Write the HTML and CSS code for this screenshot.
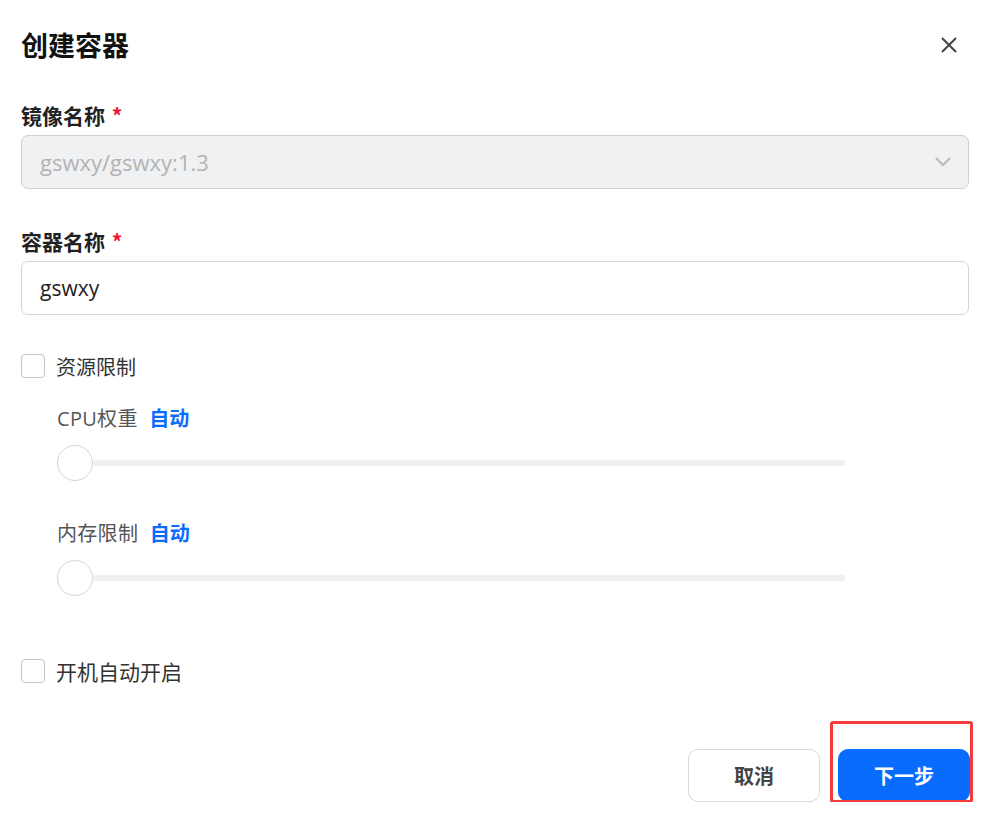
FILE: index.html
```html
<!DOCTYPE html>
<html>
<head>
    <title>创建容器</title>
    <meta charset="utf-8">
    <link rel="stylesheet" href="styles.css">
</head>
<body>
    <div class="dialog">
        <div class="dialog-header">
            <h2>创建容器</h2>
            <span class="close">
                <svg width="18" height="18" viewBox="0 0 18 18"><path d="M2 2 L16 16 M16 2 L2 16" stroke="#444" stroke-width="2" fill="none"/></svg>
            </span>
        </div>

        <div class="field">
            <label>镜像名称 <span class="req">*</span></label>
            <div class="select disabled">
                <span>gswxy/gswxy:1.3</span>
                <svg width="18" height="12" viewBox="0 0 18 12"><path d="M2 2 L9 9 L16 2" stroke="#bdbdbd" stroke-width="2.4" fill="none"/></svg>
            </div>
        </div>

        <div class="field">
            <label>容器名称 <span class="req">*</span></label>
            <div class="input">gswxy</div>
        </div>

        <div class="check-row first">
            <span class="checkbox"></span>
            <span>资源限制</span>
        </div>

        <div class="limits">
            <div class="limit-label">CPU权重 <b>自动</b></div>
            <div class="slider">
                <span class="thumb"></span>
                <span class="track"></span>
            </div>
            <div class="limit-label">内存限制 <b>自动</b></div>
            <div class="slider">
                <span class="thumb"></span>
                <span class="track"></span>
            </div>
        </div>

        <div class="check-row">
            <span class="checkbox"></span>
            <span class="wide">开机自动开启</span>
        </div>

        <div class="footer">
            <button class="btn">取消</button>
            <div class="highlight">
                <button class="btn primary">下一步</button>
            </div>
        </div>
    </div>
</body>
</html>
```

FILE: styles.css
```css
body {
    margin: 0;
    background: #fff;
    font-family: "Noto Sans CJK SC", "Noto Sans", sans-serif;
    color: #222;
}
.dialog {
    padding: 27px 25px 0 21px;
}
.dialog-header {
    display: flex;
    justify-content: space-between;
    align-items: center;
    height: 36px;
}
.dialog-header h2 {
    margin: 0;
    font-size: 27px;
    line-height: 36px;
    font-weight: 700;
    color: #111;
}
.close {
    display: flex;
    margin-right: 11px;
}
.field {
    margin-top: 38px;
}
.field label {
    display: block;
    font-size: 21px;
    line-height: 28px;
    font-weight: 700;
    color: #222;
    margin-bottom: 6px;
}
.req {
    color: #f0142f;
    margin-left: 2px;
}
.select, .input {
    height: 54px;
    box-sizing: border-box;
    border: 1px solid #d6d6d6;
    border-radius: 7px;
    padding: 0 16px 0 18px;
    display: flex;
    align-items: center;
    font-size: 21px;
    font-family: "Open Sans", "Noto Sans CJK SC", sans-serif;
}
.select {
    justify-content: space-between;
    background: #f0f1f3;
    border-color: #cfcfcf;
    color: #b3b3b3;
    font-size: 22px;
}
.input {
    color: #222;
}
.check-row {
    display: flex;
    align-items: center;
    gap: 11px;
    height: 28px;
    font-size: 20px;
    color: #333;
    margin-top: 61px;
}
.check-row.first {
    margin-top: 37px;
}
.check-row .wide {
    font-size: 21px;
}
.checkbox {
    width: 22px;
    height: 22px;
    border: 1px solid #c4c4c4;
    border-radius: 4px;
    background: #fff;
}
.limits {
    padding-left: 36px;
    padding-top: 24px;
    width: 788px;
}
.limit-label {
    font-size: 20px;
    line-height: 28px;
    color: #555;
    font-family: "Open Sans", "Noto Sans CJK SC", sans-serif;
    letter-spacing: 0.3px;
}
.limit-label b {
    color: #0a6bff;
    margin-left: 6px;
    font-family: "Noto Sans CJK SC", sans-serif;
    letter-spacing: 0;
}
.slider {
    display: flex;
    align-items: center;
    margin: 12px 0 38px;
    height: 36px;
}
.slider:last-child {
    margin-bottom: 0;
}
.thumb {
    width: 34px;
    height: 34px;
    border: 1px solid #d4d4d4;
    border-radius: 50%;
    background: #fff;
    flex: none;
}
.track {
    flex: 1;
    height: 6px;
    background: #f0f0f0;
    border-radius: 0 3px 3px 0;
}
.footer {
    display: flex;
    justify-content: flex-end;
    gap: 18px;
    margin-top: 64px;
    margin-right: -1px;
}
.btn {
    width: 132px;
    height: 53px;
    border-radius: 10px;
    border: 1px solid #d9d9d9;
    background: #fff;
    font-family: "Noto Sans CJK SC", sans-serif;
    font-size: 20px;
    font-weight: 700;
    color: #444;
}
.btn.primary {
    background: #0a6bff;
    border-color: #0a6bff;
    color: #fff;
    display: block;
}
.highlight {
    position: relative;
}
.highlight::after {
    content: "";
    position: absolute;
    left: -8px;
    right: -3px;
    top: -28px;
    bottom: -1px;
    border: 3px solid #f23c3c;
    border-radius: 3px;
}
```
